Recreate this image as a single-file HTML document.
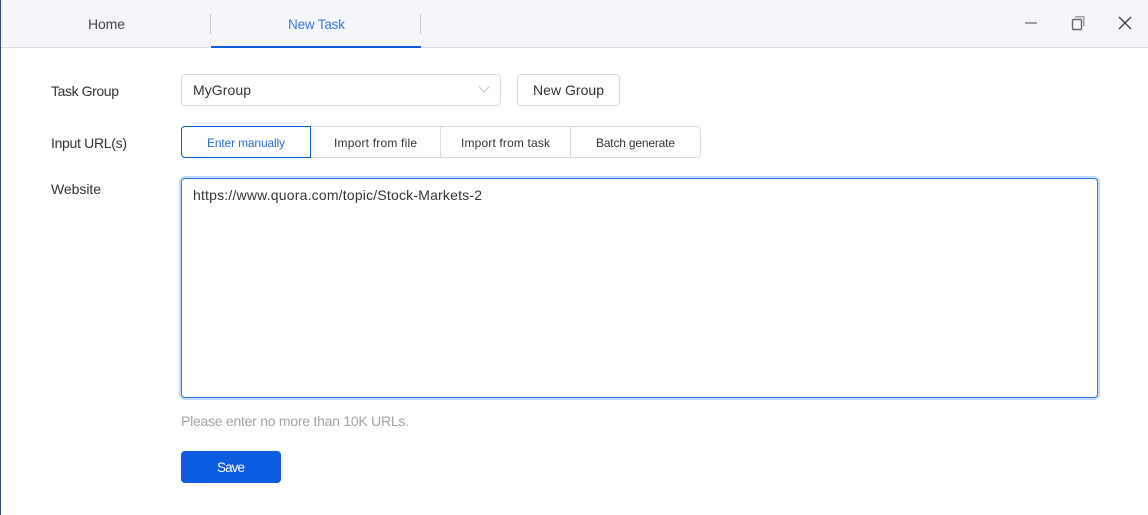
<!DOCTYPE html>
<html><head><meta charset="utf-8"><style>
html,body{margin:0;padding:0;background:#fff;width:1148px;height:515px;overflow:hidden}
.a{position:absolute;box-sizing:border-box}
svg{position:absolute;left:0;top:0}
text{font-family:"Liberation Sans",sans-serif;font-size:14px;fill:#333}
.s{font-size:12px}
</style></head><body>
<div class="a" style="left:0;top:0;width:1148px;height:48px;background:#f5f6fa;border-bottom:1px solid #dcdee5"></div>
<div class="a" style="left:0;top:0;width:1px;height:515px;background:#2f4a7d;z-index:5"></div>
<div class="a" style="left:210px;top:14px;width:1px;height:20px;background:#c9ccd4"></div>
<div class="a" style="left:420px;top:14px;width:1px;height:20px;background:#c9ccd4"></div>
<div class="a" style="left:211px;top:46px;width:210px;height:2px;background:#0b5ce0"></div>
<div class="a" style="left:181px;top:74px;width:320px;height:32px;border:1px solid #dcdcdf;border-radius:4px"></div>
<div class="a" style="left:517px;top:74px;width:103px;height:32px;border:1px solid #dcdcdf;border-radius:4px"></div>
<div class="a" style="left:181px;top:126px;width:520px;height:32px;border:1px solid #dcdcdf;border-radius:4px"></div>
<div class="a" style="left:440px;top:126px;width:1px;height:32px;background:#dcdcdf"></div>
<div class="a" style="left:570px;top:126px;width:1px;height:32px;background:#dcdcdf"></div>
<div class="a" style="left:181px;top:126px;width:130px;height:32px;border:1px solid #0b5ce0;border-radius:4px 0 0 4px;background:#fff"></div>
<div class="a" style="left:181px;top:178px;width:917px;height:220px;border:1px solid #2f78e6;border-radius:4px;box-shadow:0 0 0 2px #c4dafa"></div>
<div class="a" style="left:181px;top:451px;width:100px;height:32px;background:#0b5ce0;border-radius:4px"></div>
<svg width="1148" height="515" viewBox="0 0 1148 515">
<text x="88" y="29" textLength="37" style="fill:#444">Home</text>
<text x="288" y="29" textLength="57" style="fill:#3b78e0;font-size:13.500px">New Task</text>
<text x="51" y="96" textLength="68">Task Group</text>
<text x="193" y="95" textLength="58">MyGroup</text>
<text x="533" y="95" textLength="71">New Group</text>
<text x="51" y="148" textLength="76">Input URL(s)</text>
<text class="s" x="207" y="147" textLength="78" style="fill:#2a6be0">Enter manually</text>
<text class="s" x="334" y="147" textLength="83">Import from file</text>
<text class="s" x="461" y="147" textLength="89">Import from task</text>
<text class="s" x="596" y="147" textLength="79">Batch generate</text>
<text x="51" y="194" textLength="50">Website</text>
<text x="193" y="200" textLength="289">https://www.quora.com/topic/Stock-Markets-2</text>
<text x="181" y="426" textLength="228" style="fill:#a3a3a3">Please enter no more than 10K URLs.</text>
<text x="217" y="472" textLength="28" style="fill:#fff;font-size:13.500px">Save</text>
<path d="M479 86.500L484 92L489.500 86.500" fill="none" stroke="#c4c4c4" stroke-width="1"/>
<path d="M1025 23H1037" stroke="#808080" stroke-width="1.500" fill="none"/>
<rect x="1072.500" y="19.500" width="9" height="10" rx="1" fill="none" stroke="#666" stroke-width="1.400"/>
<path d="M1075 16.800H1083.800V26" fill="none" stroke="#888" stroke-width="1.200"/>
<path d="M1119 17L1131 29M1131 17L1119 29" stroke="#3c3c3c" stroke-width="1.300" fill="none"/>
</svg>
</body></html>
